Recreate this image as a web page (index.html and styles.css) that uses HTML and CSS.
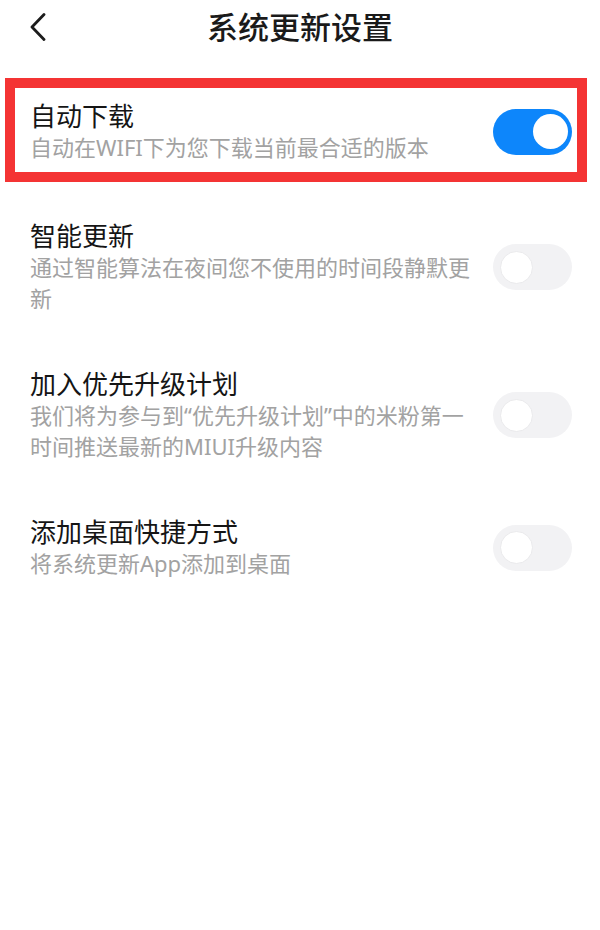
FILE: index.html
```html
<!DOCTYPE html>
<html>
<head>
<meta charset="utf-8">
<title>系统更新设置</title>
<link rel="stylesheet" href="styles.css">
</head>
<body>
<div class="bar">
	<span class="back">
		<svg width="16" height="28" viewBox="0 0 16 28"><polyline points="14,1.5 2,14 14,26.5" fill="none" stroke="#1c1c1c" stroke-width="2.8" stroke-linecap="round" stroke-linejoin="round"/></svg>
	</span>
	<h1 class="title">系统更新设置</h1>
</div>

<div class="list">
	<div class="row mark">
		<div class="txt">
			<div class="name">自动下载</div>
			<div class="desc">自动在WIFI下为您下载当前最合适的版本</div>
		</div>
		<span class="sw on"><span class="knob"></span></span>
	</div>
	<div class="row">
		<div class="txt">
			<div class="name">智能更新</div>
			<div class="desc">通过智能算法在夜间您不使用的时间段静默更新</div>
		</div>
		<span class="sw"><span class="knob"></span></span>
	</div>
	<div class="row">
		<div class="txt">
			<div class="name">加入优先升级计划</div>
			<div class="desc">我们将为参与到“优先升级计划”中的米粉第一时间推送最新的MIUI升级内容</div>
		</div>
		<span class="sw"><span class="knob"></span></span>
	</div>
	<div class="row">
		<div class="txt">
			<div class="name">添加桌面快捷方式</div>
			<div class="desc">将系统更新App添加到桌面</div>
		</div>
		<span class="sw"><span class="knob"></span></span>
	</div>
</div>
</body>
</html>
```

FILE: styles.css
```css
body {
	margin: 0;
	background: #fff;
	font-family: "Noto Sans", "Noto Sans CJK SC", sans-serif;
	color: #1a1a1a;
}
.bar {
	display: flex;
	align-items: center;
	height: 54px;
	padding: 0 30px;
}
.back {
	display: flex;
	width: 16px;
}
.title {
	flex: 1;
	margin: 0 16px 0 0;
	text-align: center;
	font-size: 31px;
	font-weight: 500;
	line-height: 40px;
	color: #1a1a1a;
}
.list {
	padding-top: 24px;
}
.row {
	display: flex;
	align-items: center;
	gap: 13px;
	padding: 27px 28px 27px 30px;
}
.row.mark {
	margin: 0 13px 11px 5px;
	padding: 12px 5px 9px 15px;
	border: 10px solid #f43434;
}
.txt {
	flex: 1;
}
.name {
	font-size: 26px;
	line-height: 32px;
	color: #151515;
}
.desc {
	font-size: 22px;
	line-height: 31px;
	color: #a2a2a2;
}
.sw {
	display: flex;
	align-items: center;
	box-sizing: border-box;
	flex: none;
	width: 79px;
	height: 46px;
	padding: 0 7px;
	border-radius: 23px;
	background: #f2f2f4;
}
.sw .knob {
	box-sizing: border-box;
	width: 33px;
	height: 33px;
	border-radius: 50%;
	background: #fff;
	border: 1px solid #eaeaec;
}
.sw.on {
	justify-content: flex-end;
	padding: 0 4px;
	background: #0d86fb;
}
.sw.on .knob {
	width: 35px;
	height: 35px;
	border: 0;
}
```
